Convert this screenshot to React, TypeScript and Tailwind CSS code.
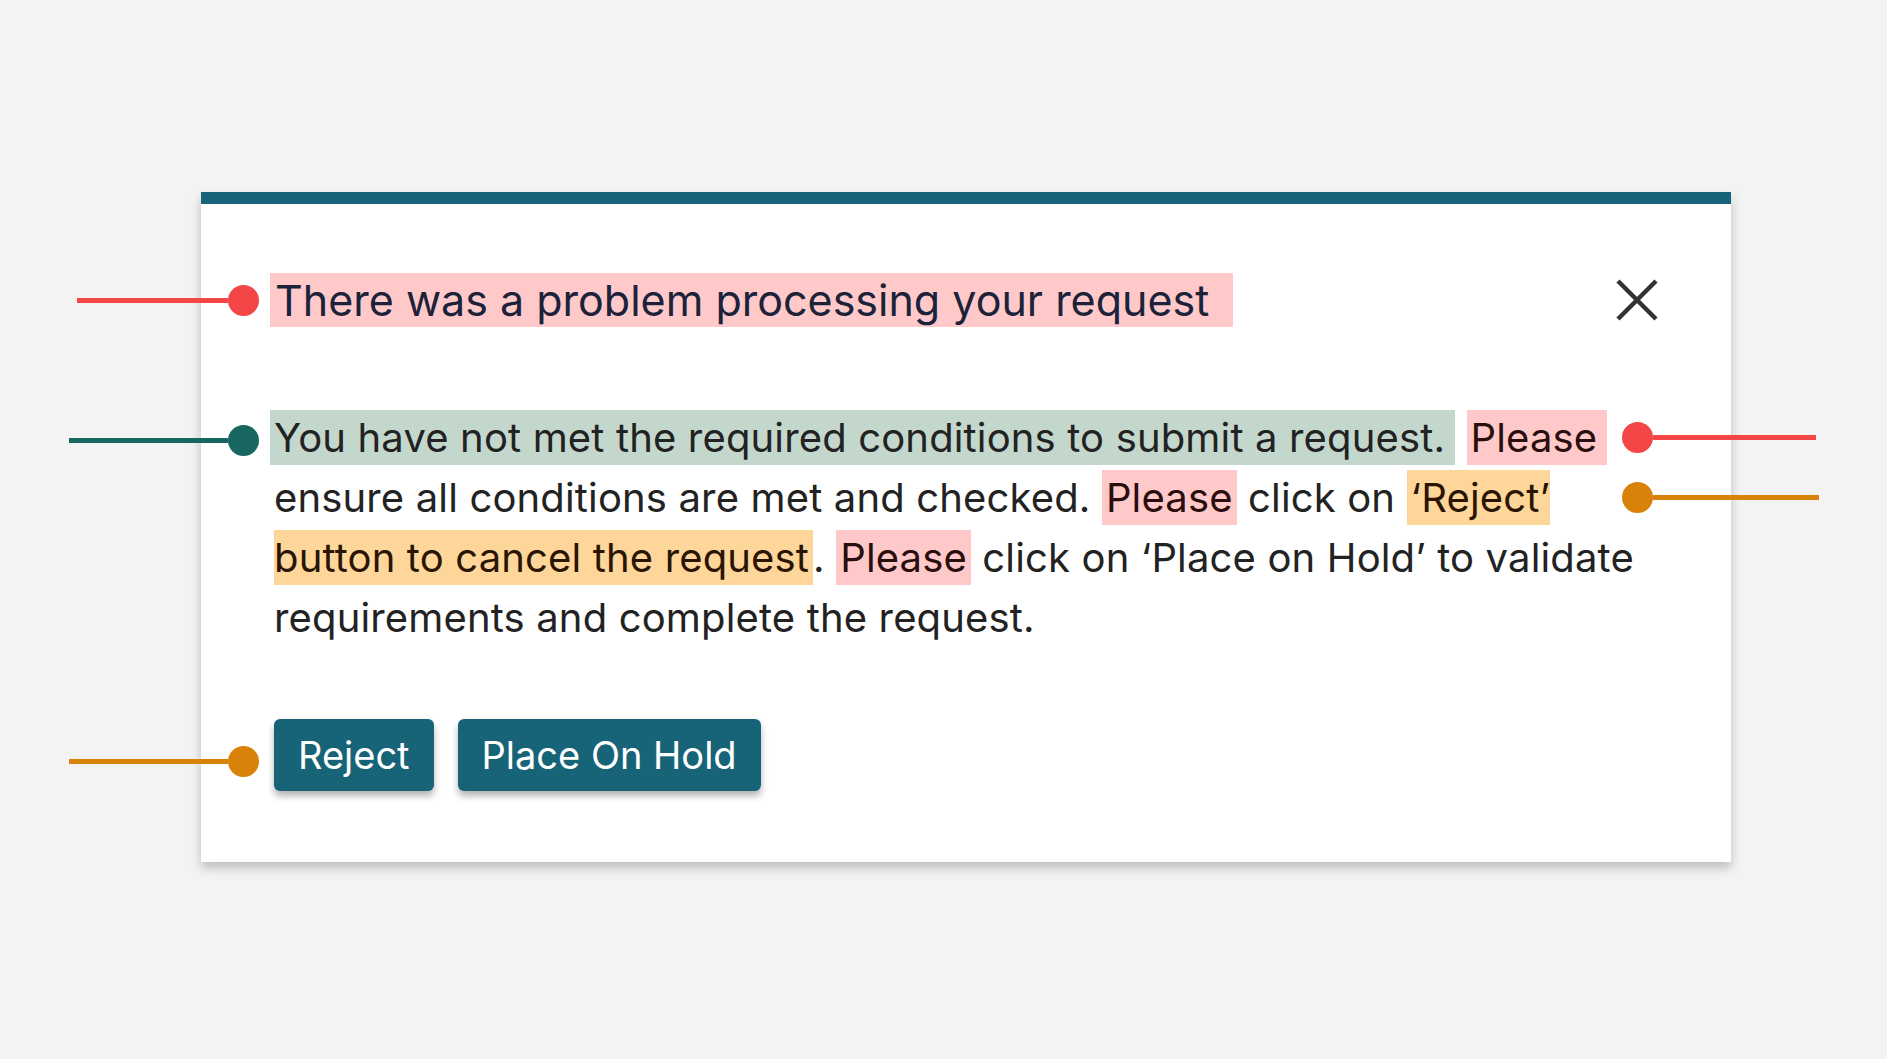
// annotation marker: a line that ends in a dot, pointing at the callout
function Marker({
  side,
  color,
  top,
  length,
}: {
  side: 'left' | 'right';
  color: string;
  top: number;
  length: number;
}) {
  const line = (
    <span className="h-[5px]" style={{ width: length, backgroundColor: color }} />
  );
  const dot = (
    <span className="h-[31px] w-[31px] shrink-0 rounded-full" style={{ backgroundColor: color }} />
  );
  return (
    <div
      className="absolute flex items-center"
      style={
        side === 'left'
          ? { top: top - 15.5, right: 'calc(100% - 58px)' }
          : { top: top - 15.5, left: 1421 }
      }
    >
      {side === 'left' ? (
        <>
          {line}
          {dot}
        </>
      ) : (
        <>
          {dot}
          {line}
        </>
      )}
    </div>
  );
}

export default function App() {
  return (
    <div className="min-h-screen w-full bg-[#f3f3f3] pl-[201px] pt-[192px] font-['Inter','Noto_Sans',sans-serif]">
      <div className="relative w-[1530px] bg-white shadow-[0_6px_10px_rgba(0,0,0,0.22)]">
        <div className="h-[12px] bg-[#17647a]" />

        <div className="px-[73px] pt-[70px] pb-[71px]">
          <div className="flex items-center justify-between">
            <h1 className="-ml-[4px] text-[43px] leading-[52px] font-normal text-[#1b2239]">
              <span className="bg-[#ffc9c9] pl-[5px] pr-[12px] py-[1px]">
                There was a problem processing your request&nbsp;
              </span>
            </h1>
            <button className="text-[#333333]">
              <svg width="42" height="42" viewBox="0 0 42 42" fill="none" stroke="currentColor" strokeWidth="4.5">
                <path d="M2 2 L40 40 M40 2 L2 40" />
              </svg>
            </button>
          </div>

          <p className="mt-[82px] w-[1380px] text-[40px] leading-[60px] tracking-[0.15px] text-[#222222]">
            <span className="-ml-[4px] bg-[#c4d7cd] pl-[4px] pr-[10px] py-[3px]">
              You have not met the required conditions to submit a request.
            </span>{' '}
            <span className="bg-[#ffc9c9] pl-[4px] pr-[10px] py-[3px] text-[#2a0d0d]">Please</span>{' '}
            ensure all conditions are met and checked.{' '}
            <span className="bg-[#ffc9c9] px-[4px] py-[3px] text-[#2a0d0d]">Please</span> click on{' '}
            <span className="bg-[#ffd699] px-[4px] py-[3px] text-[#2a1505]">
              ‘Reject’ button to cancel the request
            </span>
            .{' '}
            <span className="bg-[#ffc9c9] px-[4px] py-[3px] text-[#2a0d0d]">Please</span> click on
            ‘Place on Hold’ to validate requirements and complete the request.
          </p>

          <div className="mt-[71px] flex gap-6">
            <button className="h-[72px] rounded-md bg-[#176377] px-6 text-[38px] text-white shadow-[0_5px_7px_rgba(0,0,0,0.3)]">
              Reject
            </button>
            <button className="h-[72px] rounded-md bg-[#176377] px-6 text-[38px] text-white shadow-[0_5px_7px_rgba(0,0,0,0.3)]">
              Place On Hold
            </button>
          </div>
        </div>

        <Marker side="left" color="#f44646" top={108} length={151} />
        <Marker side="left" color="#17665f" top={248} length={159} />
        <Marker side="left" color="#d9820a" top={569} length={159} />
        <Marker side="right" color="#f44646" top={245} length={163} />
        <Marker side="right" color="#d9820a" top={305} length={166} />
      </div>
    </div>
  );
}
